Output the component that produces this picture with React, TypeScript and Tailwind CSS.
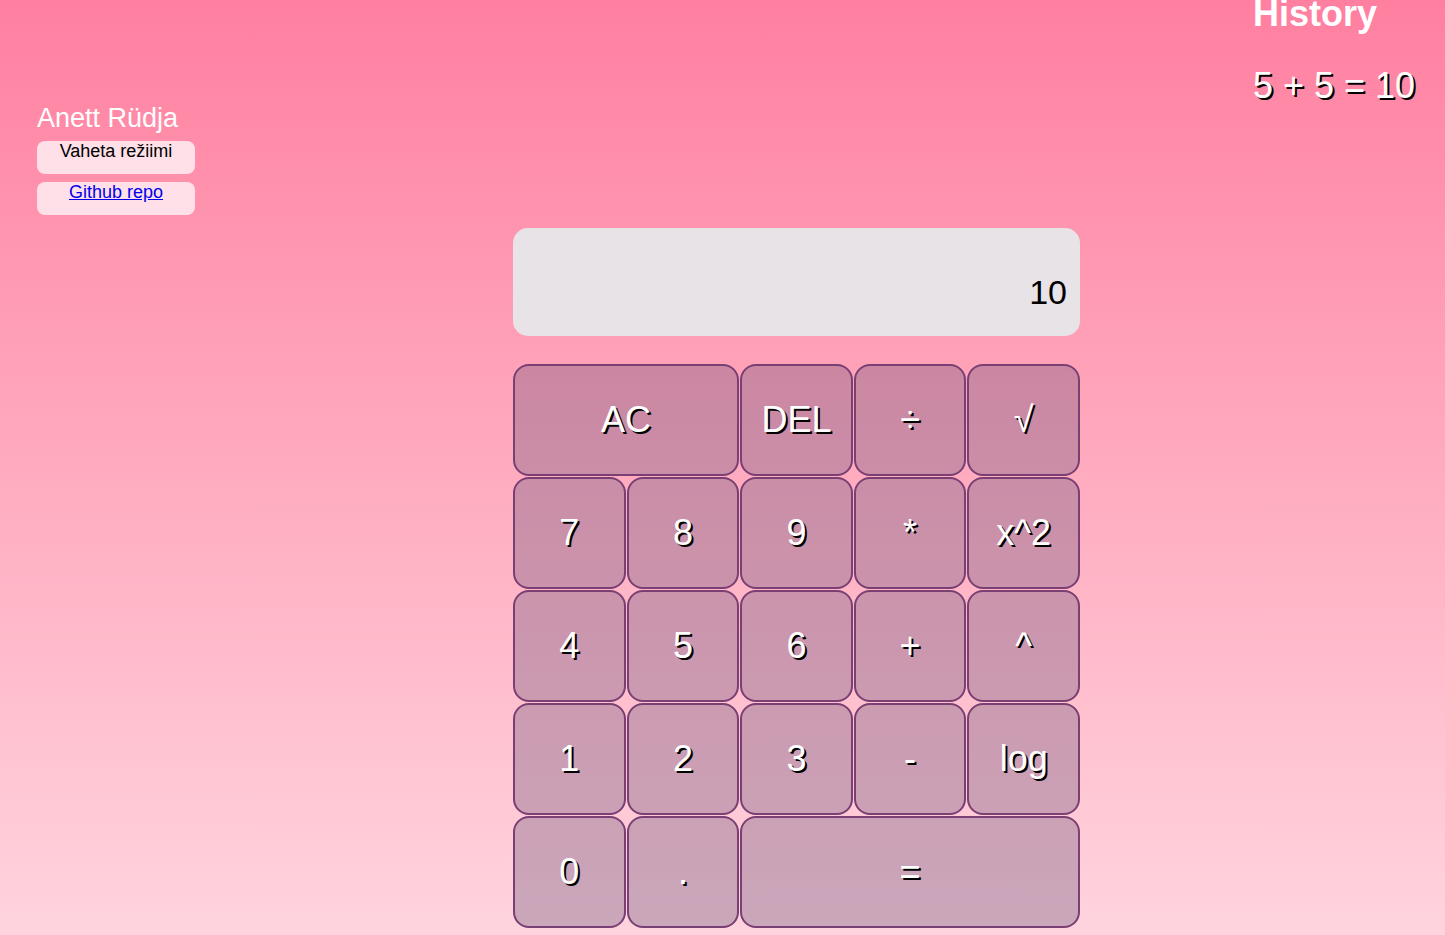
const keys: { label: string; wide?: boolean; span3?: boolean }[] = [
  { label: "AC", wide: true },
  { label: "DEL" },
  { label: "÷" },
  { label: "√" },
  { label: "7" },
  { label: "8" },
  { label: "9" },
  { label: "*" },
  { label: "x^2" },
  { label: "4" },
  { label: "5" },
  { label: "6" },
  { label: "+" },
  { label: "^" },
  { label: "1" },
  { label: "2" },
  { label: "3" },
  { label: "-" },
  { label: "log" },
  { label: "0" },
  { label: "." },
  { label: "=", span3: true },
];

export default function App() {
  return (
    <div className="flex min-h-screen h-[935px] overflow-hidden bg-gradient-to-b from-[#ff7fa0] to-[#ffd4de] font-['Liberation_Sans',Arial,sans-serif]">
      <div className="w-[513px] shrink-0 pl-[37px] pt-[103px]">
        <div className="text-[27px] leading-[31px] text-white">Anett Rüdja</div>
        <div className="mt-[7px] flex w-[158px] flex-col gap-[8px]">
          <button className="flex h-[33px] justify-center rounded-[8px] bg-[#ffe0e8] pt-[0px] text-[18px] leading-[21px] text-black">
            Vaheta režiimi
          </button>
          <div className="flex h-[33px] justify-center rounded-[8px] bg-[#ffe0e8] pt-[0px] text-[18px] leading-[21px]">
            <a href="#" className="text-[#0000ee] underline">
              Github repo
            </a>
          </div>
        </div>
      </div>

      <div className="w-[567px] shrink-0 pt-[228px]">
        <div className="flex h-[108px] items-end justify-end rounded-[15px] bg-[#e8e3e7] pb-[24px] pr-[13px] text-[34px] leading-[39px] text-black">
          10
        </div>
        <div className="mt-[28px] grid grid-cols-5 auto-rows-[112px] gap-[1px]">
          {keys.map((k) => (
            <button
              key={k.label}
              className={`flex items-center justify-center rounded-[16px] border-2 border-[#7a3f73] bg-[rgba(112,90,124,0.36)] text-[36px] text-white [text-shadow:2px_2px_0_#000] ${
                k.wide ? "col-span-2" : ""
              } ${k.span3 ? "col-span-3" : ""}`}
            >
              {k.label}
            </button>
          ))}
        </div>
      </div>

      <div className="flex-1 pl-[173px]">
        <h2 className="-mt-[7px] text-[36px] font-bold leading-[41px] text-white">History</h2>
        <div className="mt-[31px] text-[36px] leading-[41px] text-white [text-shadow:2px_2px_0_#000]">
          5 + 5 = 10
        </div>
      </div>
    </div>
  );
}
